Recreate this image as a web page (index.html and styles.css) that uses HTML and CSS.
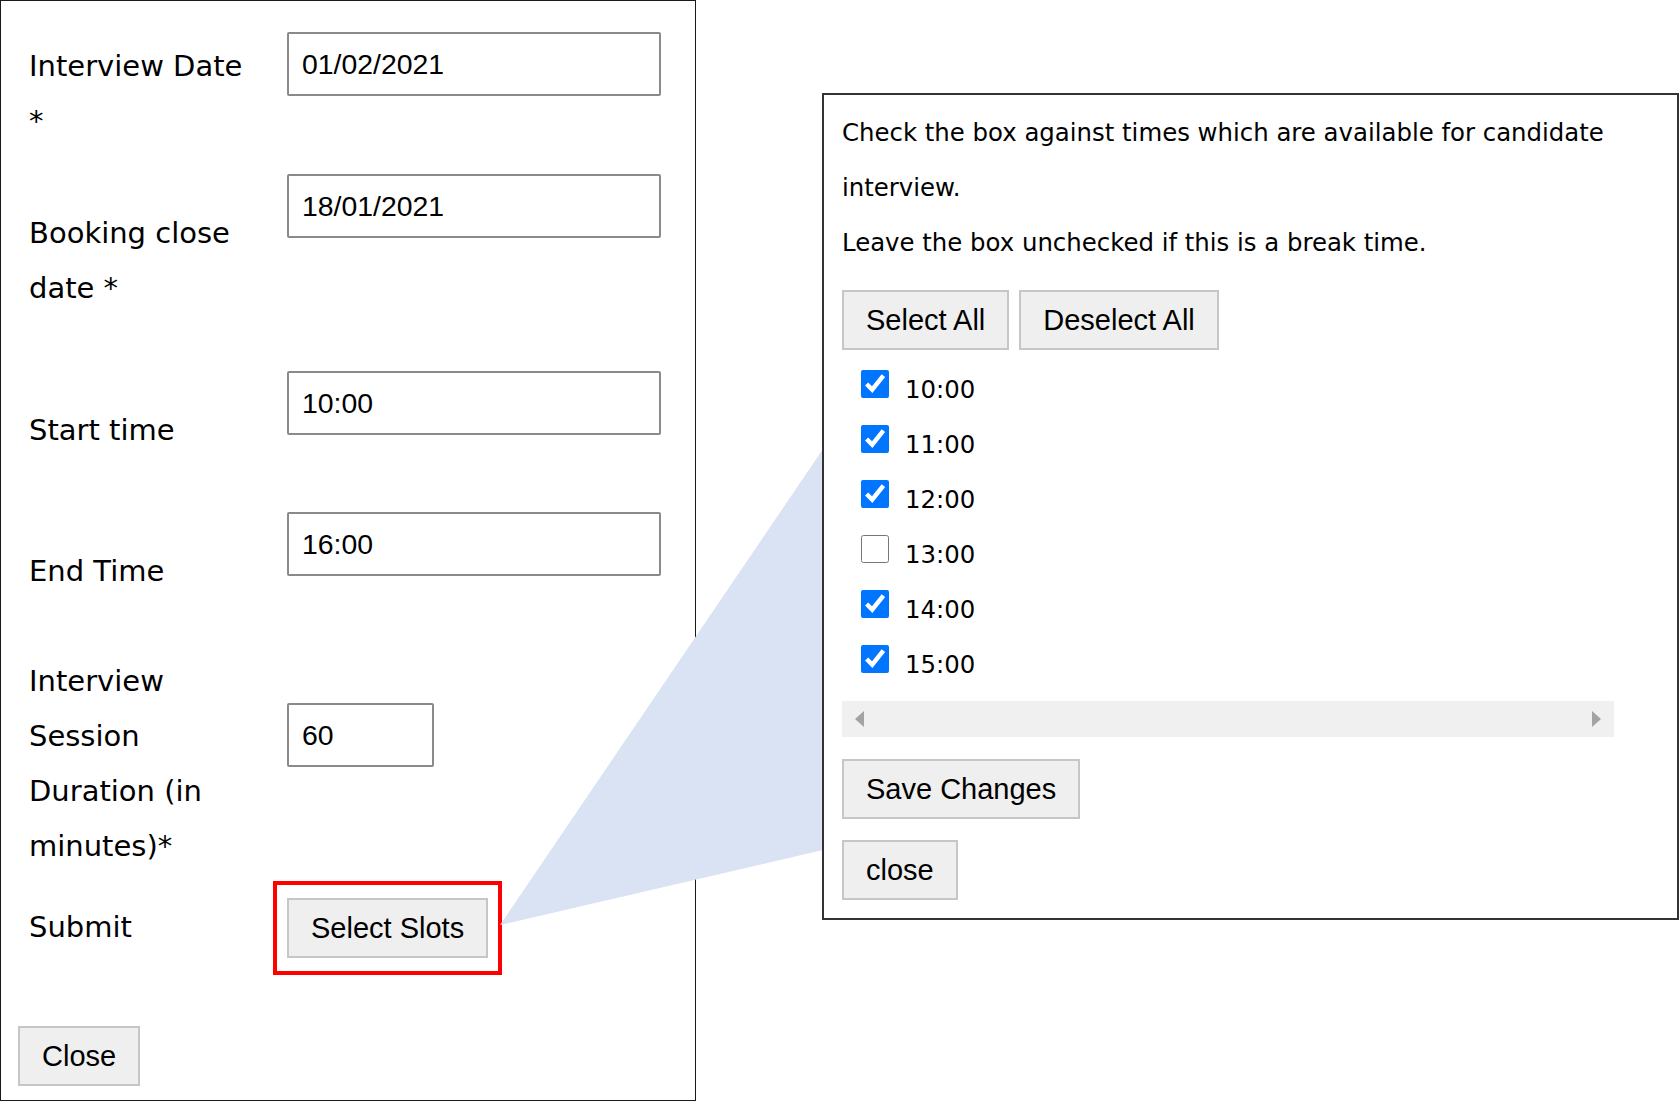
FILE: index.html
```html
<!DOCTYPE html>
<html lang="en">
<head>
    <meta charset="UTF-8">
    <meta name="viewport" content="width=device-width, initial-scale=1.0">
    <title>Interview Slots</title>
    <link rel="stylesheet" href="styles.css">
</head>
<body>

    <div class="stage">

        <!-- Interview form -->
        <section class="form-panel">
            <div class="form-row row-date">
                <label class="form-label">Interview Date *</label>
                <input class="text-input" type="text" value="01/02/2021">
            </div>
            <div class="form-row row-booking">
                <label class="form-label">Booking close date *</label>
                <input class="text-input" type="text" value="18/01/2021">
            </div>
            <div class="form-row row-start">
                <label class="form-label">Start time</label>
                <input class="text-input" type="text" value="10:00">
            </div>
            <div class="form-row row-end">
                <label class="form-label">End Time</label>
                <input class="text-input" type="text" value="16:00">
            </div>
            <div class="form-row row-duration">
                <label class="form-label">Interview Session Duration (in minutes)*</label>
                <input class="text-input short" type="text" value="60">
            </div>
            <div class="form-row row-submit">
                <span class="form-label">Submit</span>
                <div class="highlight">
                    <button class="btn" type="button">Select Slots</button>
                </div>
            </div>
            <button class="btn close-btn" type="button">Close</button>
        </section>

        <!-- Callout from the button to the popup -->
        <svg class="callout" width="1680" height="1102" viewBox="0 0 1680 1102">
            <polygon points="500,925 823,449 823,850" fill="#dae3f3"/>
        </svg>

        <!-- Slot picker popup -->
        <section class="slots-panel">
            <p class="hint">Check the box against times which are available for candidate interview.</p>
            <p class="hint">Leave the box unchecked if this is a break time.</p>

            <div class="btn-group">
                <button class="btn" type="button">Select All</button>
                <button class="btn" type="button">Deselect All</button>
            </div>

            <div class="slot-list">
                <label class="slot"><input type="checkbox" checked><span>10:00</span></label>
                <label class="slot"><input type="checkbox" checked><span>11:00</span></label>
                <label class="slot"><input type="checkbox" checked><span>12:00</span></label>
                <label class="slot"><input type="checkbox"><span>13:00</span></label>
                <label class="slot"><input type="checkbox" checked><span>14:00</span></label>
                <label class="slot"><input type="checkbox" checked><span>15:00</span></label>
            </div>

            <div class="hscroll">
                <span class="arrow-left"></span>
                <span class="arrow-right"></span>
            </div>

            <button class="btn save-btn" type="button">Save Changes</button>
            <button class="btn popup-close" type="button">close</button>
        </section>

    </div>

</body>
</html>
```

FILE: styles.css
```css
/* Page */
body {
    margin: 0;
    padding: 0;
    background-color: #fff;
    font-family: "DejaVu Sans", Verdana, sans-serif;
    color: #000;
    overflow: hidden;
}

.stage {
    position: relative;
    display: flex;
    align-items: flex-start;
    width: 1680px;
    height: 1102px;
}

/* Left form panel */
.form-panel {
    box-sizing: border-box;
    width: 696px;
    height: 1101px;
    border: 1px solid #1a1a1a;
    padding: 31px 0 0 17px;
}

.form-row {
    display: flex;
    align-items: flex-start;
    padding-left: 11px;
}

.form-label {
    width: 220px;
    margin-right: 38px;
    font-size: 29px;
    line-height: 55px;
}

.row-date .form-label { margin-top: 7px; }
.row-booking { margin-top: 25px; }
.row-booking .form-label { margin-top: 32px; }
.row-start { margin-top: 55px; }
.row-start .form-label { margin-top: 32px; }
.row-end { margin-top: 54px; }
.row-end .form-label { margin-top: 32px; }
.row-duration { margin-top: 55px; }
.row-duration .text-input { margin-top: 49px; }
.row-submit { margin-top: 7px; }
.row-submit .form-label { margin-top: 19px; }

.text-input {
    box-sizing: border-box;
    width: 374px;
    height: 64px;
    margin: 0;
    padding: 0 13px;
    border: 2px solid #8a8a8a;
    border-radius: 2px;
    font-family: "Liberation Sans", Arial, sans-serif;
    font-size: 28.4px;
    color: #000;
    background-color: #fff;
}

.text-input.short {
    width: 147px;
}

.highlight {
    margin-left: -14px;
    padding: 13px 10px;
    border: 4px solid #ff0000;
}

/* Buttons */
.btn {
    box-sizing: border-box;
    height: 60px;
    margin: 0;
    padding: 0 22px;
    border: 2px solid #c6c6c6;
    border-radius: 0;
    background-color: #efefef;
    font-family: "Liberation Sans", Arial, sans-serif;
    font-size: 29px;
    color: #000;
    cursor: pointer;
}

.btn:hover {
    background-color: #e5e5e5;
}

.close-btn {
    display: block;
    margin-top: 51px;
}

/* Callout */
.callout {
    position: absolute;
    top: 0;
    left: 0;
    z-index: 1;
    pointer-events: none;
}

/* Slot picker popup */
.slots-panel {
    position: relative;
    z-index: 2;
    box-sizing: border-box;
    width: 857px;
    height: 827px;
    margin: 93px 0 0 126px;
    padding: 10px 0 0 18px;
    border: 2px solid #333;
    background-color: #fff;
}

.hint {
    width: 772px;
    margin: 0;
    font-size: 24.4px;
    line-height: 55px;
}

.btn-group {
    display: flex;
    gap: 10px;
    margin-top: 20px;
}

.slot-list {
    margin-top: 12px;
}

.slot {
    display: flex;
    align-items: center;
    height: 55px;
    padding-left: 19px;
    font-size: 24.4px;
}

.slot input {
    width: 28px;
    height: 28px;
    margin: 0 16px 12px 0;
    accent-color: #0075ff;
}

.hscroll {
    display: flex;
    justify-content: space-between;
    align-items: center;
    box-sizing: border-box;
    width: 772px;
    height: 36px;
    margin-top: 9px;
    padding: 0 13px;
    background-color: #f0f0f0;
}

.arrow-left {
    width: 0;
    height: 0;
    border-top: 8px solid transparent;
    border-bottom: 8px solid transparent;
    border-right: 9px solid #a3a3a3;
}

.arrow-right {
    width: 0;
    height: 0;
    border-top: 8px solid transparent;
    border-bottom: 8px solid transparent;
    border-left: 9px solid #a3a3a3;
}

.save-btn {
    display: block;
    margin-top: 22px;
}

.popup-close {
    display: block;
    margin-top: 21px;
}
```
